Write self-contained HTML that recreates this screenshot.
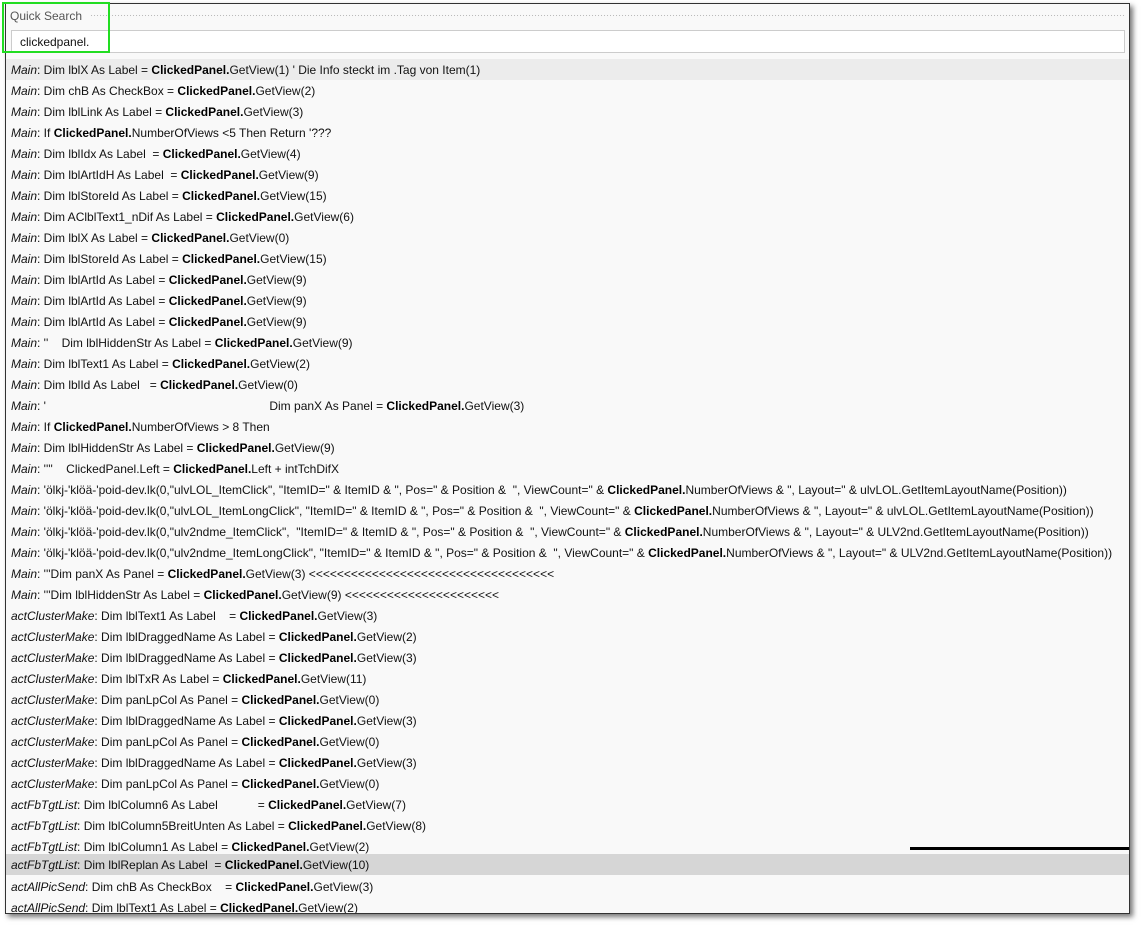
<!DOCTYPE html>
<html><head><meta charset="utf-8"><style>
body{margin:0;width:1146px;height:932px;background:#fff;position:relative;overflow:hidden;font-family:"Liberation Sans",sans-serif;}
#panel{position:absolute;left:5px;top:3px;width:1123px;height:909px;background:#f9f9f9;border:1px solid #333;box-shadow:3px 3px 5px #777;overflow:hidden}
#hdr{position:absolute;left:4px;top:5px;font-size:12px;color:#555}
#dots{position:absolute;left:84px;top:10px;right:4px;height:4px;background-image:radial-gradient(#bbb 0.6px,transparent 0.8px);background-size:3px 3px}
#sb{position:absolute;left:5px;top:26px;width:1114px;height:23px;background:#fff;border:1px solid #ccc;font-size:12px;line-height:23px;padding-left:8px;box-sizing:border-box;color:#111}
#green{position:absolute;left:2px;top:2px;width:108px;height:51px;border:2px solid #22dd22;box-sizing:border-box}
.r{position:absolute;left:0;width:1123px;height:21px;line-height:22px;font-size:12px;color:#111;white-space:pre;padding-left:5px;box-sizing:border-box}
.r i{font-style:italic}
.r b{font-weight:bold;color:#000}
#line{position:absolute;left:904px;top:843px;width:219px;height:3px;background:#000}
</style></head><body>
<div id="panel">
<div id="hdr">Quick Search</div><div id="dots"></div>
<div id="sb">clickedpanel.</div>
<div class="r" style="top:55px;background:#ececec"><i>Main</i>: Dim lblX As Label = <b>ClickedPanel.</b>GetView(1) ' Die Info steckt im .Tag von Item(1)</div>
<div class="r" style="top:76px"><i>Main</i>: Dim chB As CheckBox = <b>ClickedPanel.</b>GetView(2)</div>
<div class="r" style="top:97px"><i>Main</i>: Dim lblLink As Label = <b>ClickedPanel.</b>GetView(3)</div>
<div class="r" style="top:118px"><i>Main</i>: If <b>ClickedPanel.</b>NumberOfViews &lt;5 Then Return '???</div>
<div class="r" style="top:139px"><i>Main</i>: Dim lblIdx As Label  = <b>ClickedPanel.</b>GetView(4)</div>
<div class="r" style="top:160px"><i>Main</i>: Dim lblArtIdH As Label  = <b>ClickedPanel.</b>GetView(9)</div>
<div class="r" style="top:181px"><i>Main</i>: Dim lblStoreId As Label = <b>ClickedPanel.</b>GetView(15)</div>
<div class="r" style="top:202px"><i>Main</i>: Dim AClblText1_nDif As Label = <b>ClickedPanel.</b>GetView(6)</div>
<div class="r" style="top:223px"><i>Main</i>: Dim lblX As Label = <b>ClickedPanel.</b>GetView(0)</div>
<div class="r" style="top:244px"><i>Main</i>: Dim lblStoreId As Label = <b>ClickedPanel.</b>GetView(15)</div>
<div class="r" style="top:265px"><i>Main</i>: Dim lblArtId As Label = <b>ClickedPanel.</b>GetView(9)</div>
<div class="r" style="top:286px"><i>Main</i>: Dim lblArtId As Label = <b>ClickedPanel.</b>GetView(9)</div>
<div class="r" style="top:307px"><i>Main</i>: Dim lblArtId As Label = <b>ClickedPanel.</b>GetView(9)</div>
<div class="r" style="top:328px"><i>Main</i>: ''    Dim lblHiddenStr As Label = <b>ClickedPanel.</b>GetView(9)</div>
<div class="r" style="top:349px"><i>Main</i>: Dim lblText1 As Label = <b>ClickedPanel.</b>GetView(2)</div>
<div class="r" style="top:370px"><i>Main</i>: Dim lblId As Label   = <b>ClickedPanel.</b>GetView(0)</div>
<div class="r" style="top:391px"><i>Main</i>: '                                                                   Dim panX As Panel = <b>ClickedPanel.</b>GetView(3)</div>
<div class="r" style="top:412px"><i>Main</i>: If <b>ClickedPanel.</b>NumberOfViews &gt; 8 Then</div>
<div class="r" style="top:433px"><i>Main</i>: Dim lblHiddenStr As Label = <b>ClickedPanel.</b>GetView(9)</div>
<div class="r" style="top:454px"><i>Main</i>: ''''    ClickedPanel.Left = <b>ClickedPanel.</b>Left + intTchDifX</div>
<div class="r" style="top:475px"><i>Main</i>: 'ölkj-'klöä-'poid-dev.lk(0,"ulvLOL_ItemClick", "ItemID=" &amp; ItemID &amp; ", Pos=" &amp; Position &amp;  ", ViewCount=" &amp; <b>ClickedPanel.</b>NumberOfViews &amp; ", Layout=" &amp; ulvLOL.GetItemLayoutName(Position))</div>
<div class="r" style="top:496px"><i>Main</i>: 'ölkj-'klöä-'poid-dev.lk(0,"ulvLOL_ItemLongClick", "ItemID=" &amp; ItemID &amp; ", Pos=" &amp; Position &amp;  ", ViewCount=" &amp; <b>ClickedPanel.</b>NumberOfViews &amp; ", Layout=" &amp; ulvLOL.GetItemLayoutName(Position))</div>
<div class="r" style="top:517px"><i>Main</i>: 'ölkj-'klöä-'poid-dev.lk(0,"ulv2ndme_ItemClick",  "ItemID=" &amp; ItemID &amp; ", Pos=" &amp; Position &amp;  ", ViewCount=" &amp; <b>ClickedPanel.</b>NumberOfViews &amp; ", Layout=" &amp; ULV2nd.GetItemLayoutName(Position))</div>
<div class="r" style="top:538px"><i>Main</i>: 'ölkj-'klöä-'poid-dev.lk(0,"ulv2ndme_ItemLongClick", "ItemID=" &amp; ItemID &amp; ", Pos=" &amp; Position &amp;  ", ViewCount=" &amp; <b>ClickedPanel.</b>NumberOfViews &amp; ", Layout=" &amp; ULV2nd.GetItemLayoutName(Position))</div>
<div class="r" style="top:559px"><i>Main</i>: '''Dim panX As Panel = <b>ClickedPanel.</b>GetView(3) &lt;&lt;&lt;&lt;&lt;&lt;&lt;&lt;&lt;&lt;&lt;&lt;&lt;&lt;&lt;&lt;&lt;&lt;&lt;&lt;&lt;&lt;&lt;&lt;&lt;&lt;&lt;&lt;&lt;&lt;&lt;&lt;&lt;&lt;&lt;</div>
<div class="r" style="top:580px"><i>Main</i>: '''Dim lblHiddenStr As Label = <b>ClickedPanel.</b>GetView(9) &lt;&lt;&lt;&lt;&lt;&lt;&lt;&lt;&lt;&lt;&lt;&lt;&lt;&lt;&lt;&lt;&lt;&lt;&lt;&lt;&lt;&lt;</div>
<div class="r" style="top:601px"><i>actClusterMake</i>: Dim lblText1 As Label    = <b>ClickedPanel.</b>GetView(3)</div>
<div class="r" style="top:622px"><i>actClusterMake</i>: Dim lblDraggedName As Label = <b>ClickedPanel.</b>GetView(2)</div>
<div class="r" style="top:643px"><i>actClusterMake</i>: Dim lblDraggedName As Label = <b>ClickedPanel.</b>GetView(3)</div>
<div class="r" style="top:664px"><i>actClusterMake</i>: Dim lblTxR As Label = <b>ClickedPanel.</b>GetView(11)</div>
<div class="r" style="top:685px"><i>actClusterMake</i>: Dim panLpCol As Panel = <b>ClickedPanel.</b>GetView(0)</div>
<div class="r" style="top:706px"><i>actClusterMake</i>: Dim lblDraggedName As Label = <b>ClickedPanel.</b>GetView(3)</div>
<div class="r" style="top:727px"><i>actClusterMake</i>: Dim panLpCol As Panel = <b>ClickedPanel.</b>GetView(0)</div>
<div class="r" style="top:748px"><i>actClusterMake</i>: Dim lblDraggedName As Label = <b>ClickedPanel.</b>GetView(3)</div>
<div class="r" style="top:769px"><i>actClusterMake</i>: Dim panLpCol As Panel = <b>ClickedPanel.</b>GetView(0)</div>
<div class="r" style="top:790px"><i>actFbTgtList</i>: Dim lblColumn6 As Label            = <b>ClickedPanel.</b>GetView(7)</div>
<div class="r" style="top:811px"><i>actFbTgtList</i>: Dim lblColumn5BreitUnten As Label = <b>ClickedPanel.</b>GetView(8)</div>
<div class="r" style="top:832px"><i>actFbTgtList</i>: Dim lblColumn1 As Label = <b>ClickedPanel.</b>GetView(2)</div>
<div id="line"></div>
<div class="r" style="top:850px;background:#d6d6d6"><i>actFbTgtList</i>: Dim lblReplan As Label  = <b>ClickedPanel.</b>GetView(10)</div>
<div class="r" style="top:872px"><i>actAllPicSend</i>: Dim chB As CheckBox    = <b>ClickedPanel.</b>GetView(3)</div>
<div class="r" style="top:893px"><i>actAllPicSend</i>: Dim lblText1 As Label = <b>ClickedPanel.</b>GetView(2)</div>
</div>
<div id="green"></div>
</body></html>
